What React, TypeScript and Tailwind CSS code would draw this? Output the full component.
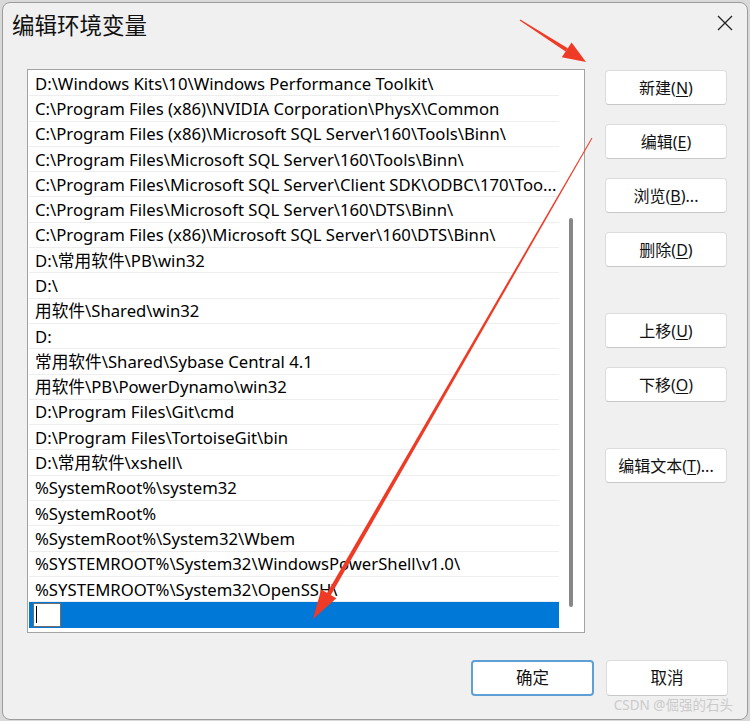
import React from 'react';

const paths: string[] = [
    "D:\\Windows Kits\\10\\Windows Performance Toolkit\\",
    "C:\\Program Files (x86)\\NVIDIA Corporation\\PhysX\\Common",
    "C:\\Program Files (x86)\\Microsoft SQL Server\\160\\Tools\\Binn\\",
    "C:\\Program Files\\Microsoft SQL Server\\160\\Tools\\Binn\\",
    "C:\\Program Files\\Microsoft SQL Server\\Client SDK\\ODBC\\170\\Too...",
    "C:\\Program Files\\Microsoft SQL Server\\160\\DTS\\Binn\\",
    "C:\\Program Files (x86)\\Microsoft SQL Server\\160\\DTS\\Binn\\",
    "D:\\常用软件\\PB\\win32",
    "D:\\",
    "用软件\\Shared\\win32",
    "D:",
    "常用软件\\Shared\\Sybase Central 4.1",
    "用软件\\PB\\PowerDynamo\\win32",
    "D:\\Program Files\\Git\\cmd",
    "D:\\Program Files\\TortoiseGit\\bin",
    "D:\\常用软件\\xshell\\",
    "%SystemRoot%\\system32",
    "%SystemRoot%",
    "%SystemRoot%\\System32\\Wbem",
    "%SYSTEMROOT%\\System32\\WindowsPowerShell\\v1.0\\",
    "%SYSTEMROOT%\\System32\\OpenSSH\\",
];

type Btn = { label: string; key: string; tail?: string; gap?: string };

const sideButtons: Btn[] = [
    { label: "新建", key: "N" },
    { label: "编辑", key: "E", gap: "mt-[19px]" },
    { label: "浏览", key: "B", tail: "...", gap: "mt-[19px]" },
    { label: "删除", key: "D", gap: "mt-[19px]" },
    { label: "上移", key: "U", gap: "mt-[46px]" },
    { label: "下移", key: "O", gap: "mt-[19px]" },
    { label: "编辑文本", key: "T", tail: "...", gap: "mt-[46px]" },
];

const SideButton: React.FC<{ btn: Btn }> = ({ btn }) => (
    <button
        type="button"
        className={`${btn.gap ?? ""} h-[35px] w-[122px] flex items-center justify-center bg-white border border-[#dcdcdc] border-b-[#c8c8c8] rounded-[4px] text-[16px] text-[#111]`}
    >
        {btn.label}(<span className="underline underline-offset-2">{btn.key}</span>){btn.tail}
    </button>
);

const Arrows: React.FC = () => (
    <svg className="absolute left-0 top-0 pointer-events-none" width="750" height="721" viewBox="0 0 750 721">
        {/* arrow to 新建 */}
        <polygon points="520.3,19.5 519.7,20.4 565.6,51.6 567.8,48.2" fill="#ef3b26" />
        <polygon points="586,62 561.8,57.2 571.6,42.6" fill="#ef3b26" />
        {/* long arrow down to the new row */}
        <polygon points="592.4,138.3 591.6,137.7 326.4,594 330.2,596.2" fill="#ef3b26" />
        <polygon points="313,619 321.2,589.5 336.4,598.3" fill="#ef3b26" />
    </svg>
);

const App: React.FC = () => {
    return (
        <div
            className="relative w-[750px] h-[721px] bg-[#d9d9d9] pl-[2px] pt-[2px] overflow-hidden"
            style={{ fontFamily: '"Noto Sans", "Noto Sans CJK SC", sans-serif' }}
        >
            <div className="w-[746px] h-[718px] bg-[#f0f0f0] border border-[#9c9c9c] rounded-[8px] flex flex-col">
                {/* title bar */}
                <div className="h-[42px] flex items-center justify-between pl-[9px] pr-[14px]">
                    <span className="text-[22.5px] text-[#111] leading-none" style={{ fontFamily: '"Noto Sans CJK SC", sans-serif' }}>编辑环境变量</span>
                    <svg width="16" height="16" viewBox="0 0 16 16" className="mt-[-2px]">
                        <path d="M1 1 L15 15 M15 1 L1 15" stroke="#222" strokeWidth="1.3" fill="none" />
                    </svg>
                </div>

                {/* body */}
                <div className="flex pl-[24px] pt-[24px]">
                    <div className="w-[558px] h-[564px] bg-white border border-[#a3a3a3] flex p-px">
                        <div className="w-[530px] flex flex-col">
                            {paths.map((p) => (
                                <div
                                    key={p}
                                    className="h-[25.3px] shrink-0 border-b border-[#eeeeee] pl-[6px] flex items-center text-[16.7px] text-black whitespace-nowrap overflow-hidden"
                                >
                                    {p}
                                </div>
                            ))}
                            <div className="h-[25.3px] shrink-0 bg-[#0078d7] pl-[4px] py-px flex">
                                <div className="w-[28px] h-full bg-white border border-[#6f6f6f] flex items-center pl-[2px]">
                                    <div className="w-px h-[17px] bg-black" />
                                </div>
                            </div>
                        </div>
                        <div className="flex-1 flex justify-center pt-[147px]">
                            <div className="w-[4px] h-[389px] rounded-full bg-[#878787] ml-[-1px]" />
                        </div>
                    </div>

                    <div className="ml-[20px] pt-px flex flex-col">
                        {sideButtons.map((b) => (
                            <SideButton key={b.key} btn={b} />
                        ))}
                    </div>
                </div>

                {/* footer */}
                <div className="flex justify-end gap-[12px] pr-[19px] mt-[27px]">
                    <button
                        type="button"
                        className="h-[36px] w-[123px] flex items-center justify-center bg-white border-2 border-[#5e9fd6] rounded-[4px] text-[16.5px] text-[#111]"
                    >
                        确定
                    </button>
                    <button
                        type="button"
                        className="h-[36px] w-[122px] flex items-center justify-center bg-white border border-[#dcdcdc] border-b-[#c8c8c8] rounded-[4px] text-[16.5px] text-[#111]"
                    >
                        取消
                    </button>
                </div>
                <div className="flex justify-end pr-[14px] mt-[3px]">
                    <span className="text-[13.5px] text-[#cbcbcb] leading-none">CSDN @倔强的石头</span>
                </div>
            </div>
            <Arrows />
        </div>
    );
};

export default App;
